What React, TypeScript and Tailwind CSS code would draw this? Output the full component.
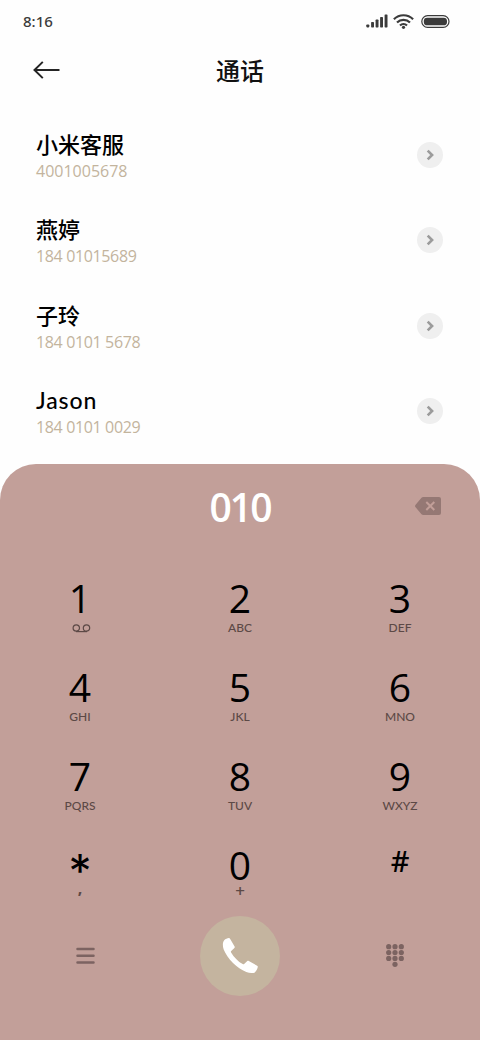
import React, { useState } from 'react';

interface Contact {
  name: string;
  phone: string;
}

interface PadKey {
  digit: string;
  sub: string;
}

const contacts: Contact[] = [
  { name: '小米客服', phone: '4001005678' },
  { name: '燕婷', phone: '184 01015689' },
  { name: '子玲', phone: '184 0101 5678' },
  { name: 'Jason', phone: '184 0101 0029' },
];

const padKeys: PadKey[] = [
  { digit: '1', sub: 'voicemail' },
  { digit: '2', sub: 'ABC' },
  { digit: '3', sub: 'DEF' },
  { digit: '4', sub: 'GHI' },
  { digit: '5', sub: 'JKL' },
  { digit: '6', sub: 'MNO' },
  { digit: '7', sub: 'PQRS' },
  { digit: '8', sub: 'TUV' },
  { digit: '9', sub: 'WXYZ' },
  { digit: '*', sub: ',' },
  { digit: '0', sub: '+' },
  { digit: '#', sub: '' },
];

function StatusBar() {
  return (
    <div className="h-[42px] pl-[23px] pr-[30px] flex items-center justify-between text-[#3b3b3b]">
      <span className="text-[15px] leading-[42px] font-medium font-['Noto_Sans',sans-serif]">8:16</span>
      <div className="flex items-center">
        {/* Signal */}
        <svg width="22" height="14" viewBox="0 0 22 14" fill="currentColor">
          <rect x="0.3" y="10.5" width="3" height="2.9" rx="0.8" />
          <rect x="5.1" y="8" width="2.9" height="5.4" rx="0.7" />
          <rect x="9.6" y="5.6" width="2.9" height="7.8" rx="0.7" />
          <rect x="14.1" y="3.1" width="2.9" height="10.3" rx="0.7" />
          <rect x="18.6" y="0.4" width="2.9" height="13" rx="0.7" />
        </svg>
        {/* Wifi */}
        <svg className="ml-[5px]" width="21" height="15" viewBox="0 0 21 15" fill="none" stroke="currentColor" strokeWidth="2.2">
          <path d="M.9 5.2a13.6 13.6 0 0 1 19.2 0" />
          <path d="M4 8.5a9.2 9.2 0 0 1 13 0" />
          <path d="M7 11.5a5 5 0 0 1 7 0" />
          <circle cx="10.5" cy="13.3" r="1.6" fill="currentColor" stroke="none" />
        </svg>
        {/* Battery */}
        <svg className="ml-[7px]" width="29" height="13" viewBox="0 0 29 13">
          <rect x="0.8" y="0.7" width="27.2" height="11.6" rx="5.8" fill="none" stroke="currentColor" strokeWidth="1.2" />
          <rect x="2.8" y="2.7" width="23.2" height="7.6" rx="3.4" fill="currentColor" />
        </svg>
      </div>
    </div>
  );
}

function ContactRow({ name, phone }: Contact) {
  const isLatin = /^[A-Za-z]/.test(name);
  const isMobile = phone.includes(' ');

  return (
    <div className="h-[85.33px] pl-9 pr-[37px] flex justify-between">
      <div>
        <div
          className={`h-[30px] leading-[30px] font-medium text-black ${
            isLatin ? "text-[23px] tracking-[0.9px] font-['Lato',sans-serif]" : 'text-[22px]'
          }`}
        >
          {name}
        </div>
        <div className={`h-[22px] text-[16px] leading-[24px] text-[#c3b49d] ${isMobile ? 'tracking-[-0.36px]' : ''}`}>
          {phone}
        </div>
      </div>
      <button type="button" className="mt-[13px] w-[26px] h-[26px] rounded-full bg-[#efefef] flex items-center justify-center">
        <svg width="8" height="12" viewBox="0 0 8 12" fill="none" stroke="#9b9b9b" strokeWidth="2.6">
          <path d="M1.700 1.600 6.100 6 1.700 10.400" />
        </svg>
      </button>
    </div>
  );
}

function KeySymbol({ digit }: { digit: string }) {
  if (digit === '*') {
    return <span className="block h-10 text-[46px] leading-[52px] font-['Inter',sans-serif]">*</span>;
  }
  if (digit === '#') {
    return <span className="block text-[29px] leading-[32px] font-medium font-['Noto_Sans',sans-serif]">#</span>;
  }
  return <span className="block text-[39px] leading-[40px]">{digit}</span>;
}

function KeyLabel({ sub }: { sub: string }) {
  if (sub === 'voicemail') {
    return (
      <svg className="mt-[6px] ml-[3px]" width="19" height="9" viewBox="0 0 19 9" fill="none" stroke="#5c4946" strokeWidth="1.2">
        <circle cx="4.3" cy="4" r="3.2" />
        <circle cx="14.5" cy="4" r="3.2" />
        <path d="M4 7.600H15" />
      </svg>
    );
  }
  if (sub === ',') {
    return <span className="block text-[16px] leading-[7px] font-bold text-[#5c4946]">,</span>;
  }
  if (sub === '+') {
    return <span className="block text-[17px] leading-[12px] font-semibold text-[#5c4946]">+</span>;
  }
  return <span className="block text-[12px] leading-[19px] font-medium font-['Lato',sans-serif] text-[#5c4946]">{sub}</span>;
}

export default function App() {
  const [number, setNumber] = useState('010');

  return (
    <div className="w-[480px] h-[1040px] bg-[#fefefe] overflow-hidden flex flex-col font-['Open_Sans','Noto_Sans_CJK_SC',sans-serif]">
      <StatusBar />

      {/* Header */}
      <div className="h-[54px] grid grid-cols-3 items-center">
        <button type="button" className="ml-[33px] mb-[2px] w-[27px] text-[#242424]">
          <svg width="27" height="18" viewBox="0 0 27 18" fill="none" stroke="currentColor" strokeWidth="2">
            <path d="M9.800.9 1.500 9l8.300 8.100M1.500 9H26.500" />
          </svg>
        </button>
        <h1 className="text-center text-[24px] leading-[57px] font-medium text-[#111]">通话</h1>
      </div>

      <div className="h-[368px] pt-[33px]">
        {contacts.map((c) => (
          <ContactRow key={c.name} name={c.name} phone={c.phone} />
        ))}
      </div>

      {/* Dial panel */}
      <div className="flex-1 bg-[#c29f99] rounded-t-[36px]">
        <div className="h-[85px] grid grid-cols-3 items-center">
          <span />
          <span className="text-center text-[39px] leading-[85px] font-semibold tracking-[-2px] text-white">{number}</span>
          <button type="button" className="justify-self-end mr-[39px] mb-[2px]" onClick={() => setNumber(number.slice(0, -1))}>
            <svg width="26" height="18" viewBox="0 0 26 18">
              <path d="M8.300 0H24a2 2 0 0 1 2 2v14a2 2 0 0 1-2 2H8.300a2.500 2.500 0 0 1-1.800-.8L.6 10.300a2 2 0 0 1 0-2.600L6.500.8A2.500 2.500 0 0 1 8.300 0Z" fill="#957874" />
              <path d="m11.300 5 8 8m0-8-8 8" stroke="#c29f99" strokeWidth="2" />
            </svg>
          </button>
        </div>

        <div className="mt-[29px] grid grid-cols-3 auto-rows-[88.9px] text-center">
          {padKeys.map((k) => (
            <button key={k.digit} type="button" className="flex flex-col items-center justify-start text-black" onClick={() => setNumber(number + k.digit)}>
              <KeySymbol digit={k.digit} />
              <KeyLabel sub={k.sub} />
            </button>
          ))}
        </div>

        {/* Bottom actions */}
        <div className="-mt-[18px] grid grid-cols-3 items-center justify-items-center">
          <button type="button" className="ml-[10px]">
            <svg width="19" height="18" viewBox="0 0 19 18" stroke="#7c6361" strokeWidth="2.5" strokeLinecap="round">
              <path d="M1.500 2h16M1.500 8.700h16M1.500 15.400h16" />
            </svg>
          </button>
          <button type="button" className="w-20 h-20 rounded-full bg-[#c4b49f] flex items-center justify-center">
            <svg width="36" height="36" viewBox="0 0 36 36" fill="white">
              <path d="M2.200 2.300C3.500 1 5.300.2 6.900.1c.6 0 1 .3 1.300.8l4.400 7.600c.3.5.2 1-.2 1.400L9.200 13c-.4.4-.4.9-.1 1.400 2.700 4.600 7 9 11.600 11.700.5.3 1 .2 1.400-.1l3.200-2.900c.5-.4 1-.4 1.500-.1l8.300 4.700c.6.3.8.8.7 1.400-.4 2-1.600 4.100-3 5.300-1.400 1-5.500 1-8.500-.4C19.500 31.800 15 28.900 11 25 6.700 20.700 3.400 15.800 1.700 11.500.6 8.400.4 4.300 2.200 2.300Z" />
            </svg>
          </button>
          <button type="button" className="-ml-[10px]">
            <svg width="18" height="24" viewBox="0 0 18 24" fill="#7c6361">
              {[2.7, 8.5, 14.4].map((cy) =>
                [2.7, 9, 15.3].map((cx) => <circle key={`${cx}-${cy}`} cx={cx} cy={cy} r="2.6" />)
              )}
              <circle cx="9" cy="20.300" r="2.600" />
            </svg>
          </button>
        </div>
      </div>
    </div>
  );
}
